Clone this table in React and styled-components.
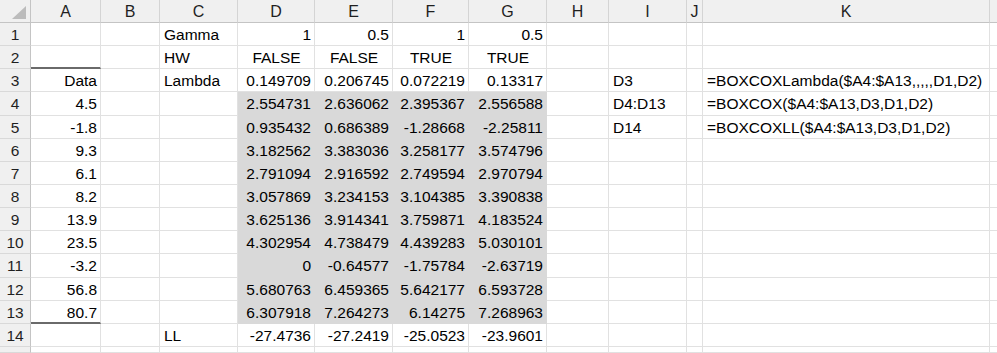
import React from 'react';
import styled, { createGlobalStyle } from 'styled-components';

const GlobalStyle = createGlobalStyle`
  html, body {
    margin: 0;
    padding: 0;
    background: #ffffff;
  }
  body {
    font-family: 'Liberation Sans', Arial, sans-serif;
  }
`;

const columns = [
  { key: 'A', width: 70 },
  { key: 'B', width: 59 },
  { key: 'C', width: 78 },
  { key: 'D', width: 77 },
  { key: 'E', width: 78 },
  { key: 'F', width: 76 },
  { key: 'G', width: 78 },
  { key: 'H', width: 62 },
  { key: 'I', width: 78 },
  { key: 'J', width: 16 },
  { key: 'K', width: 287 },
  { key: '', width: 0 },
];

const gridCols = `31px ${columns
  .map((c) => (c.width ? `${c.width}px` : '1fr'))
  .join(' ')}`;

// value: [text, align]
const data = {
  1: { C: ['Gamma', 'left'], D: ['1'], E: ['0.5'], F: ['1'], G: ['0.5'] },
  2: {
    C: ['HW', 'left'],
    D: ['FALSE', 'center'],
    E: ['FALSE', 'center'],
    F: ['TRUE', 'center'],
    G: ['TRUE', 'center'],
  },
  3: {
    A: ['Data'],
    C: ['Lambda', 'left'],
    D: ['0.149709'],
    E: ['0.206745'],
    F: ['0.072219'],
    G: ['0.13317'],
    I: ['D3', 'left'],
    K: ['=BOXCOXLambda($A4:$A13,,,,,D1,D2)', 'left'],
  },
  4: {
    A: ['4.5'],
    D: ['2.554731'],
    E: ['2.636062'],
    F: ['2.395367'],
    G: ['2.556588'],
    I: ['D4:D13', 'left'],
    K: ['=BOXCOX($A4:$A13,D3,D1,D2)', 'left'],
  },
  5: {
    A: ['-1.8'],
    D: ['0.935432'],
    E: ['0.686389'],
    F: ['-1.28668'],
    G: ['-2.25811'],
    I: ['D14', 'left'],
    K: ['=BOXCOXLL($A4:$A13,D3,D1,D2)', 'left'],
  },
  6: { A: ['9.3'], D: ['3.182562'], E: ['3.383036'], F: ['3.258177'], G: ['3.574796'] },
  7: { A: ['6.1'], D: ['2.791094'], E: ['2.916592'], F: ['2.749594'], G: ['2.970794'] },
  8: { A: ['8.2'], D: ['3.057869'], E: ['3.234153'], F: ['3.104385'], G: ['3.390838'] },
  9: { A: ['13.9'], D: ['3.625136'], E: ['3.914341'], F: ['3.759871'], G: ['4.183524'] },
  10: { A: ['23.5'], D: ['4.302954'], E: ['4.738479'], F: ['4.439283'], G: ['5.030101'] },
  11: { A: ['-3.2'], D: ['0'], E: ['-0.64577'], F: ['-1.75784'], G: ['-2.63719'] },
  12: { A: ['56.8'], D: ['5.680763'], E: ['6.459365'], F: ['5.642177'], G: ['6.593728'] },
  13: { A: ['80.7'], D: ['6.307918'], E: ['7.264273'], F: ['6.14275'], G: ['7.268963'] },
  14: { C: ['LL', 'left'], D: ['-27.4736'], E: ['-27.2419'], F: ['-25.0523'], G: ['-23.9601'] },
};

const isShaded = (row, col) => row >= 4 && row <= 13 && col !== '' && 'DEFG'.includes(col);
const hasRule = (row, col) => col === 'A' && (row === 2 || row === 13);

const Sheet = styled.div`
  display: grid;
  grid-template-columns: ${gridCols};
  grid-template-rows: 23px repeat(14, 23.15px) 1fr;
  width: 997px;
  height: 353px;
  overflow: hidden;
  font-size: 15.5px;
  color: #000000;
`;

const Corner = styled.div`
  position: relative;
  background: #f0f0f0;
  border-right: 1px solid #c4c4c4;
  border-bottom: 1px solid #c4c4c4;
  box-sizing: border-box;

  &::after {
    content: '';
    position: absolute;
    right: 4px;
    bottom: 3px;
    width: 0;
    height: 0;
    border-left: 14px solid transparent;
    border-bottom: 13px solid #bcbcbc;
  }
`;

const ColHeader = styled.div`
  background: #f0f0f0;
  border-right: 1px solid #d4d4d4;
  border-bottom: 1px solid #c4c4c4;
  box-sizing: border-box;
  text-align: center;
  line-height: 23px;
  font-size: 16px;
  color: #1f1f1f;
`;

const RowHeader = styled.div`
  background: #f0f0f0;
  border-right: 1px solid #c4c4c4;
  border-bottom: 1px solid #d9d9d9;
  box-sizing: border-box;
  text-align: center;
  line-height: 23px;
  color: #1f1f1f;
`;

const Cell = styled.div`
  box-sizing: border-box;
  padding: 0 3px 0 4px;
  line-height: 23px;
  white-space: nowrap;
  text-align: ${(p) => p.$align};
  background: ${(p) => (p.$shaded ? '#d9d9d9' : '#ffffff')};
  border-right: 1px solid ${(p) => (p.$shaded ? '#d9d9d9' : '#e1e1e1')};
  border-bottom: ${(p) =>
    p.$rule
      ? '2px solid #6a6a6a'
      : `1px solid ${p.$shaded ? '#d9d9d9' : '#e1e1e1'}`};
`;

export default function App() {
  const rows = Array.from({ length: 15 }, (_, i) => i + 1);

  return (
    <>
      <GlobalStyle />
      <Sheet>
        <Corner />
        {columns.map((c, i) => (
          <ColHeader key={`h${i}`}>{c.key}</ColHeader>
        ))}
        {rows.map((r) => (
          <React.Fragment key={r}>
            <RowHeader>{r <= 14 ? r : ''}</RowHeader>
            {columns.map((c, i) => {
              const value = data[r]?.[c.key];
              return (
                <Cell
                  key={`${r}-${i}`}
                  $align={value?.[1] || 'right'}
                  $shaded={isShaded(r, c.key)}
                  $rule={hasRule(r, c.key)}
                >
                  {value?.[0]}
                </Cell>
              );
            })}
          </React.Fragment>
        ))}
      </Sheet>
    </>
  );
}
